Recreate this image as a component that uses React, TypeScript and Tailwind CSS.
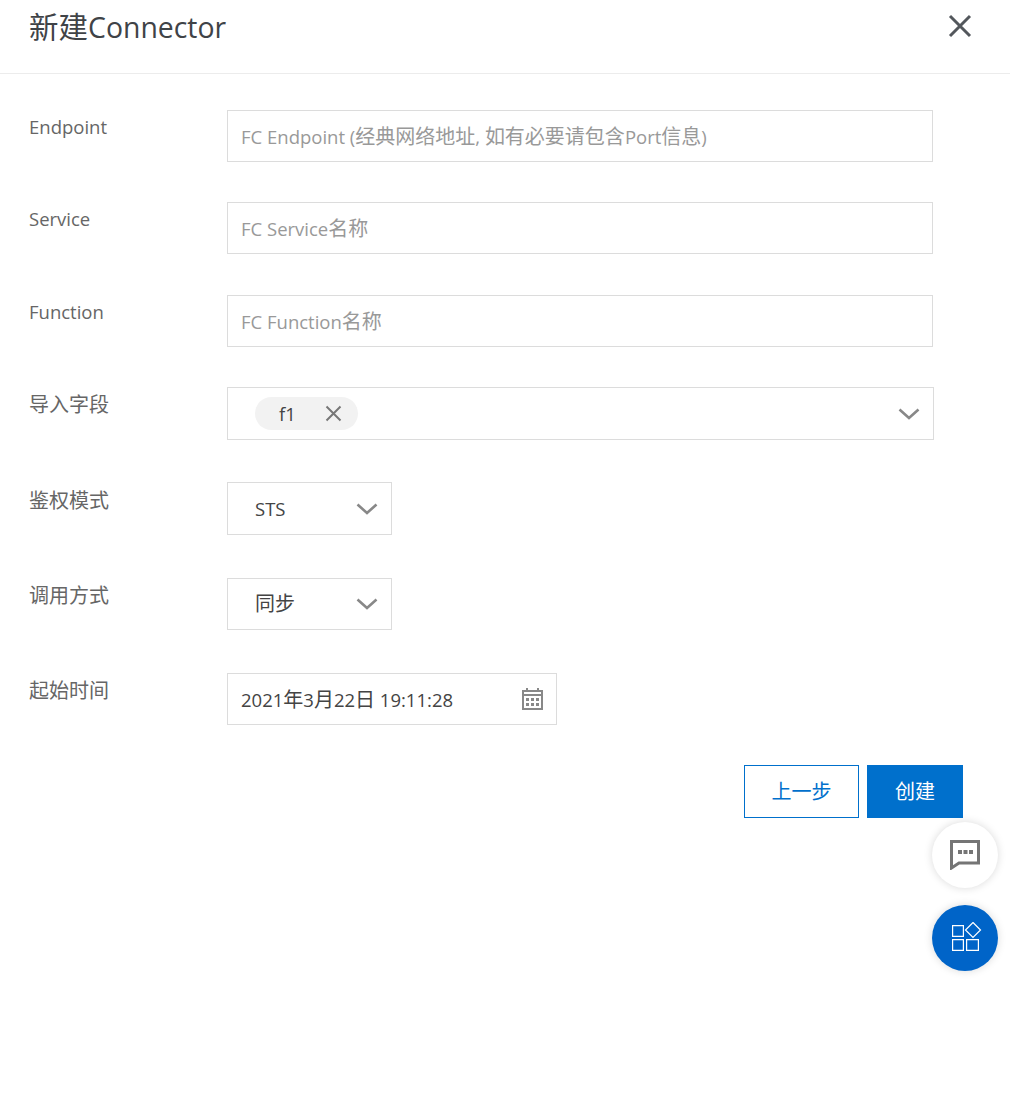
import React from "react";

const font = '"Open Sans", "Noto Sans CJK SC", sans-serif';

// The reference's CJK glyphs run a little larger than its Latin ones.
function T({ text, title }: { text: string; title?: boolean }) {
  const parts = text.split(/([\u3000-\u9fff]+)/).filter(Boolean);
  return (
    <span className="whitespace-pre">
      {parts.map((p, i) =>
        /[\u3000-\u9fff]/.test(p) ? (
          <span key={i} className={title ? "text-[29.5px]" : "text-[20px]"}>{p}</span>
        ) : (
          <span key={i} className={title ? "text-[28.4px]" : "text-[18.5px]"}>{p}</span>
        )
      )}
    </span>
  );
}

function Chevron() {
  return (
    <svg width="22" height="12" viewBox="0 0 22 12" fill="none" stroke="#888" strokeWidth="2.6">
      <path d="M1.5 1.5 L11 10 L20.5 1.5" />
    </svg>
  );
}

function Row({ label, children, className, labelClass = "pt-1" }: { label: string; children: React.ReactNode; className: string; labelClass?: string }) {
  return (
    <div className={`flex ${className}`}>
      <div className={`w-[227px] pl-[29px] shrink-0 leading-[26px] text-[#666] ${labelClass}`}><T text={label} /></div>
      {children}
    </div>
  );
}

function TextBox({ text }: { text: string }) {
  return (
    <div className="w-[706px] h-[52px] border border-[#dcdcdc] flex items-center pl-[13px] pt-[2px] text-[#999]">
      <T text={text} />
    </div>
  );
}

function SmallSelect({ text, tall }: { text: string; tall?: boolean }) {
  return (
    <div className={`w-[165px] ${tall ? "h-[53px]" : "h-[52px]"} border border-[#dcdcdc] flex items-center justify-between pl-[27px] pr-[13px] text-[#444]`}>
      <T text={text} />
      <Chevron />
    </div>
  );
}

export default function App() {
  return (
    <div className="relative w-[1010px] h-[1093px] bg-white overflow-hidden" style={{ fontFamily: font }}>
      <div className="h-[74px] border-b border-[#ececec] flex items-start justify-between pl-[29px] pr-[38px]">
        <div className="leading-[54px] text-[#3f4347]"><T text="新建Connector" title /></div>
        <svg className="mt-[14px]" width="24" height="24" viewBox="0 0 24 24" fill="none" stroke="#53575c" strokeWidth="3">
          <path d="M2 2 L22 22 M22 2 L2 22" />
        </svg>
      </div>

      <div className="pt-[36px]">
        <Row label="Endpoint" className="mb-[40px]">
          <TextBox text="FC Endpoint (经典网络地址, 如有必要请包含Port信息)" />
        </Row>
        <Row label="Service" className="mb-[41px]">
          <TextBox text="FC Service名称" />
        </Row>
        <Row label="Function" className="mb-[40px]">
          <TextBox text="FC Function名称" />
        </Row>
        <Row label="导入字段" className="mb-[42px]" labelClass="pt-[5px]">
          <div className="w-[707px] h-[53px] border border-[#dcdcdc] flex items-center justify-between pl-[27px] pr-[13px]">
            <div className="w-[103px] h-[33px] rounded-full bg-[#f2f2f2] flex items-center justify-between pl-[24px] pr-[16px] text-[#444]">
              <T text="f1" />
              <svg width="17" height="17" viewBox="0 0 17 17" fill="none" stroke="#777" strokeWidth="2">
                <path d="M1.5 1.5 L15.5 15.5 M15.5 1.5 L1.5 15.5" />
              </svg>
            </div>
            <Chevron />
          </div>
        </Row>
        <Row label="鉴权模式" className="mb-[43px]" labelClass="pt-[6px]">
          <SmallSelect text="STS" tall />
        </Row>
        <Row label="调用方式" className="mb-[43px]" labelClass="pt-[5px]">
          <SmallSelect text="同步" />
        </Row>
        <Row label="起始时间" className="mb-[40px]" labelClass="pt-[5px]">
          <div className="w-[330px] h-[52px] border border-[#dcdcdc] flex items-center justify-between pl-[13px] pr-[13px] pt-[1px] text-[#444]">
            <T text="2021年3月22日 19:11:28" />
            <svg className="mt-[-1px]" width="21" height="22" viewBox="0 0 21 22" fill="#888">
              <path d="M4 0h2v3H4zM15 0h2v3h-2z" />
              <path fillRule="evenodd" d="M0 2h21v20H0zM2 4v2h17V4zM2 8v12h17V8z" />
              <path d="M4 10h3v3H4zM9 10h3v3H9zM14 10h3v3h-3zM4 15h3v3H4zM9 15h3v3H9zM14 15h3v3h-3z" />
            </svg>
          </div>
        </Row>
        <div className="flex justify-end gap-2 pr-[47px]">
          <div className="w-[115px] h-[53px] border border-[#0070cc] flex items-center justify-center text-[#0070cc]"><T text="上一步" /></div>
          <div className="w-[96px] h-[53px] bg-[#0070cc] flex items-center justify-center text-white"><T text="创建" /></div>
        </div>
      </div>

      <div className="absolute left-[932px] top-[822px] w-[66px] h-[66px] rounded-full bg-white shadow-[0_0_8px_rgba(0,0,0,0.15)] flex items-center justify-center">
        <svg width="30" height="30" viewBox="0 0 30 30" fill="none">
          <path d="M1.5 1.5 H28.5 V23 H9 L1.5 28 Z" stroke="#757575" strokeWidth="3" />
          <path d="M8 10h4v4H8zM13.5 10h4v4h-4zM19 10h4v4h-4z" fill="#757575" />
        </svg>
      </div>
      <div className="absolute left-[932px] top-[905px] w-[66px] h-[66px] rounded-full bg-[#0064c8] shadow-[0_0_8px_rgba(0,0,0,0.15)] flex items-center justify-center">
        <svg className="ml-[4px] mt-[-2px]" width="30" height="30" viewBox="0 0 30 30" fill="none" stroke="#fff" strokeWidth="1.2">
          <path d="M0.6 3.6h10.8v10.8H0.6zM0.6 17.6h10.8v10.8H0.6zM14.6 17.6h11.8v10.8H14.6z" />
          <path d="M21 0.5 L28.5 8 L21 15.5 L13.5 8 Z" />
        </svg>
      </div>
    </div>
  );
}
